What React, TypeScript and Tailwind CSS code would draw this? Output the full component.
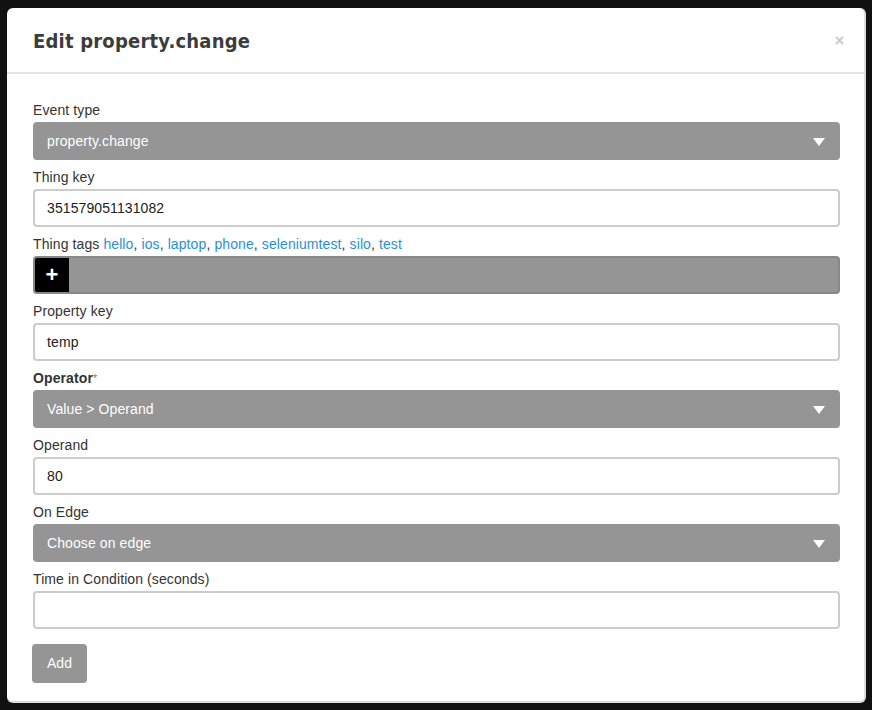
import React from "react";

const tags = ["hello", "ios", "laptop", "phone", "seleniumtest", "silo", "test"];

const Caret = () => (
  <svg width="12" height="8" viewBox="0 0 12 8" className="absolute right-[15px] top-[16px]">
    <path d="M0 0 L12 0 L6 8 Z" fill="#ffffff" />
  </svg>
);

const SelectBox = ({ value }: { value: string }) => (
  <div className="relative h-[38px] rounded-[4px] bg-[#959595] text-white text-[14px] leading-[38px] pl-[14px] tracking-[0.1px]">
    {value}
    <Caret />
  </div>
);

const TextBox = ({ value }: { value: string }) => (
  <div className="h-[38px] rounded-[4px] border-2 border-[#cccccc] bg-white text-[#222] text-[14px] leading-[34px] pl-[12px] tracking-[0.1px]">
    {value}
  </div>
);

const Field = ({ label, children }: { label: React.ReactNode; children: React.ReactNode }) => (
  <div className="mb-[8px]">
    <div className="h-[21px] leading-[18px] text-[14px] text-[#333] tracking-[0.1px]">{label}</div>
    {children}
  </div>
);

const App = () => {
  return (
    <div className="w-[872px] h-[710px] bg-[#111111] pt-[8px] pl-[7px]" style={{ fontFamily: '"Liberation Sans", Arial, sans-serif' }}>
      <div className="w-[859px] h-[695px] bg-white rounded-[6px] border-r-2 border-b-2 border-[#dddddd]">
        <div className="h-[66px] border-b-2 border-[#e5e5e5] flex items-center justify-between pl-[26px] pr-[20px] pt-[2px]">
          <h2
            className="text-[20px] font-bold text-[#3c3c3c] tracking-[0.2px]"
            style={{ fontFamily: '"DejaVu Sans Condensed", "DejaVu Sans", sans-serif' }}
          >
            Edit property.change
          </h2>
          <span className="text-[#c8c8c8] text-[16px] font-bold">×</span>
        </div>
        <div className="pt-[27px] pl-[26px] pr-[24px]">
          <Field label="Event type">
            <SelectBox value="property.change" />
          </Field>
          <Field label="Thing key">
            <TextBox value="351579051131082" />
          </Field>
          <Field
            label={
              <>
                Thing tags{" "}
                {tags.map((t, i) => (
                  <span key={t}>
                    <span className="text-[#2a8fd8]">{t}</span>
                    {i < tags.length - 1 ? ", " : ""}
                  </span>
                ))}
              </>
            }
          >
            <div className="h-[38px] rounded-[4px] border-2 border-[#888888] bg-[#959595] flex overflow-hidden">
              <div className="w-[34px] h-full bg-black flex items-center justify-center text-white text-[22px] font-bold leading-none">
                +
              </div>
            </div>
          </Field>
          <Field label="Property key">
            <TextBox value="temp" />
          </Field>
          <Field
            label={
              <span className="font-bold">
                Operator<span className="text-[#d9534f] font-normal text-[11px] align-top">*</span>
              </span>
            }
          >
            <SelectBox value="Value > Operand" />
          </Field>
          <Field label="Operand">
            <TextBox value="80" />
          </Field>
          <Field label="On Edge">
            <SelectBox value="Choose on edge" />
          </Field>
          <Field label="Time in Condition (seconds)">
            <TextBox value="" />
          </Field>
          <button className="mt-[7px] -ml-[1px] h-[39px] w-[55px] rounded-[4px] bg-[#959595] text-white text-[14px]">
            Add
          </button>
        </div>
      </div>
    </div>
  );
};

export default App;
